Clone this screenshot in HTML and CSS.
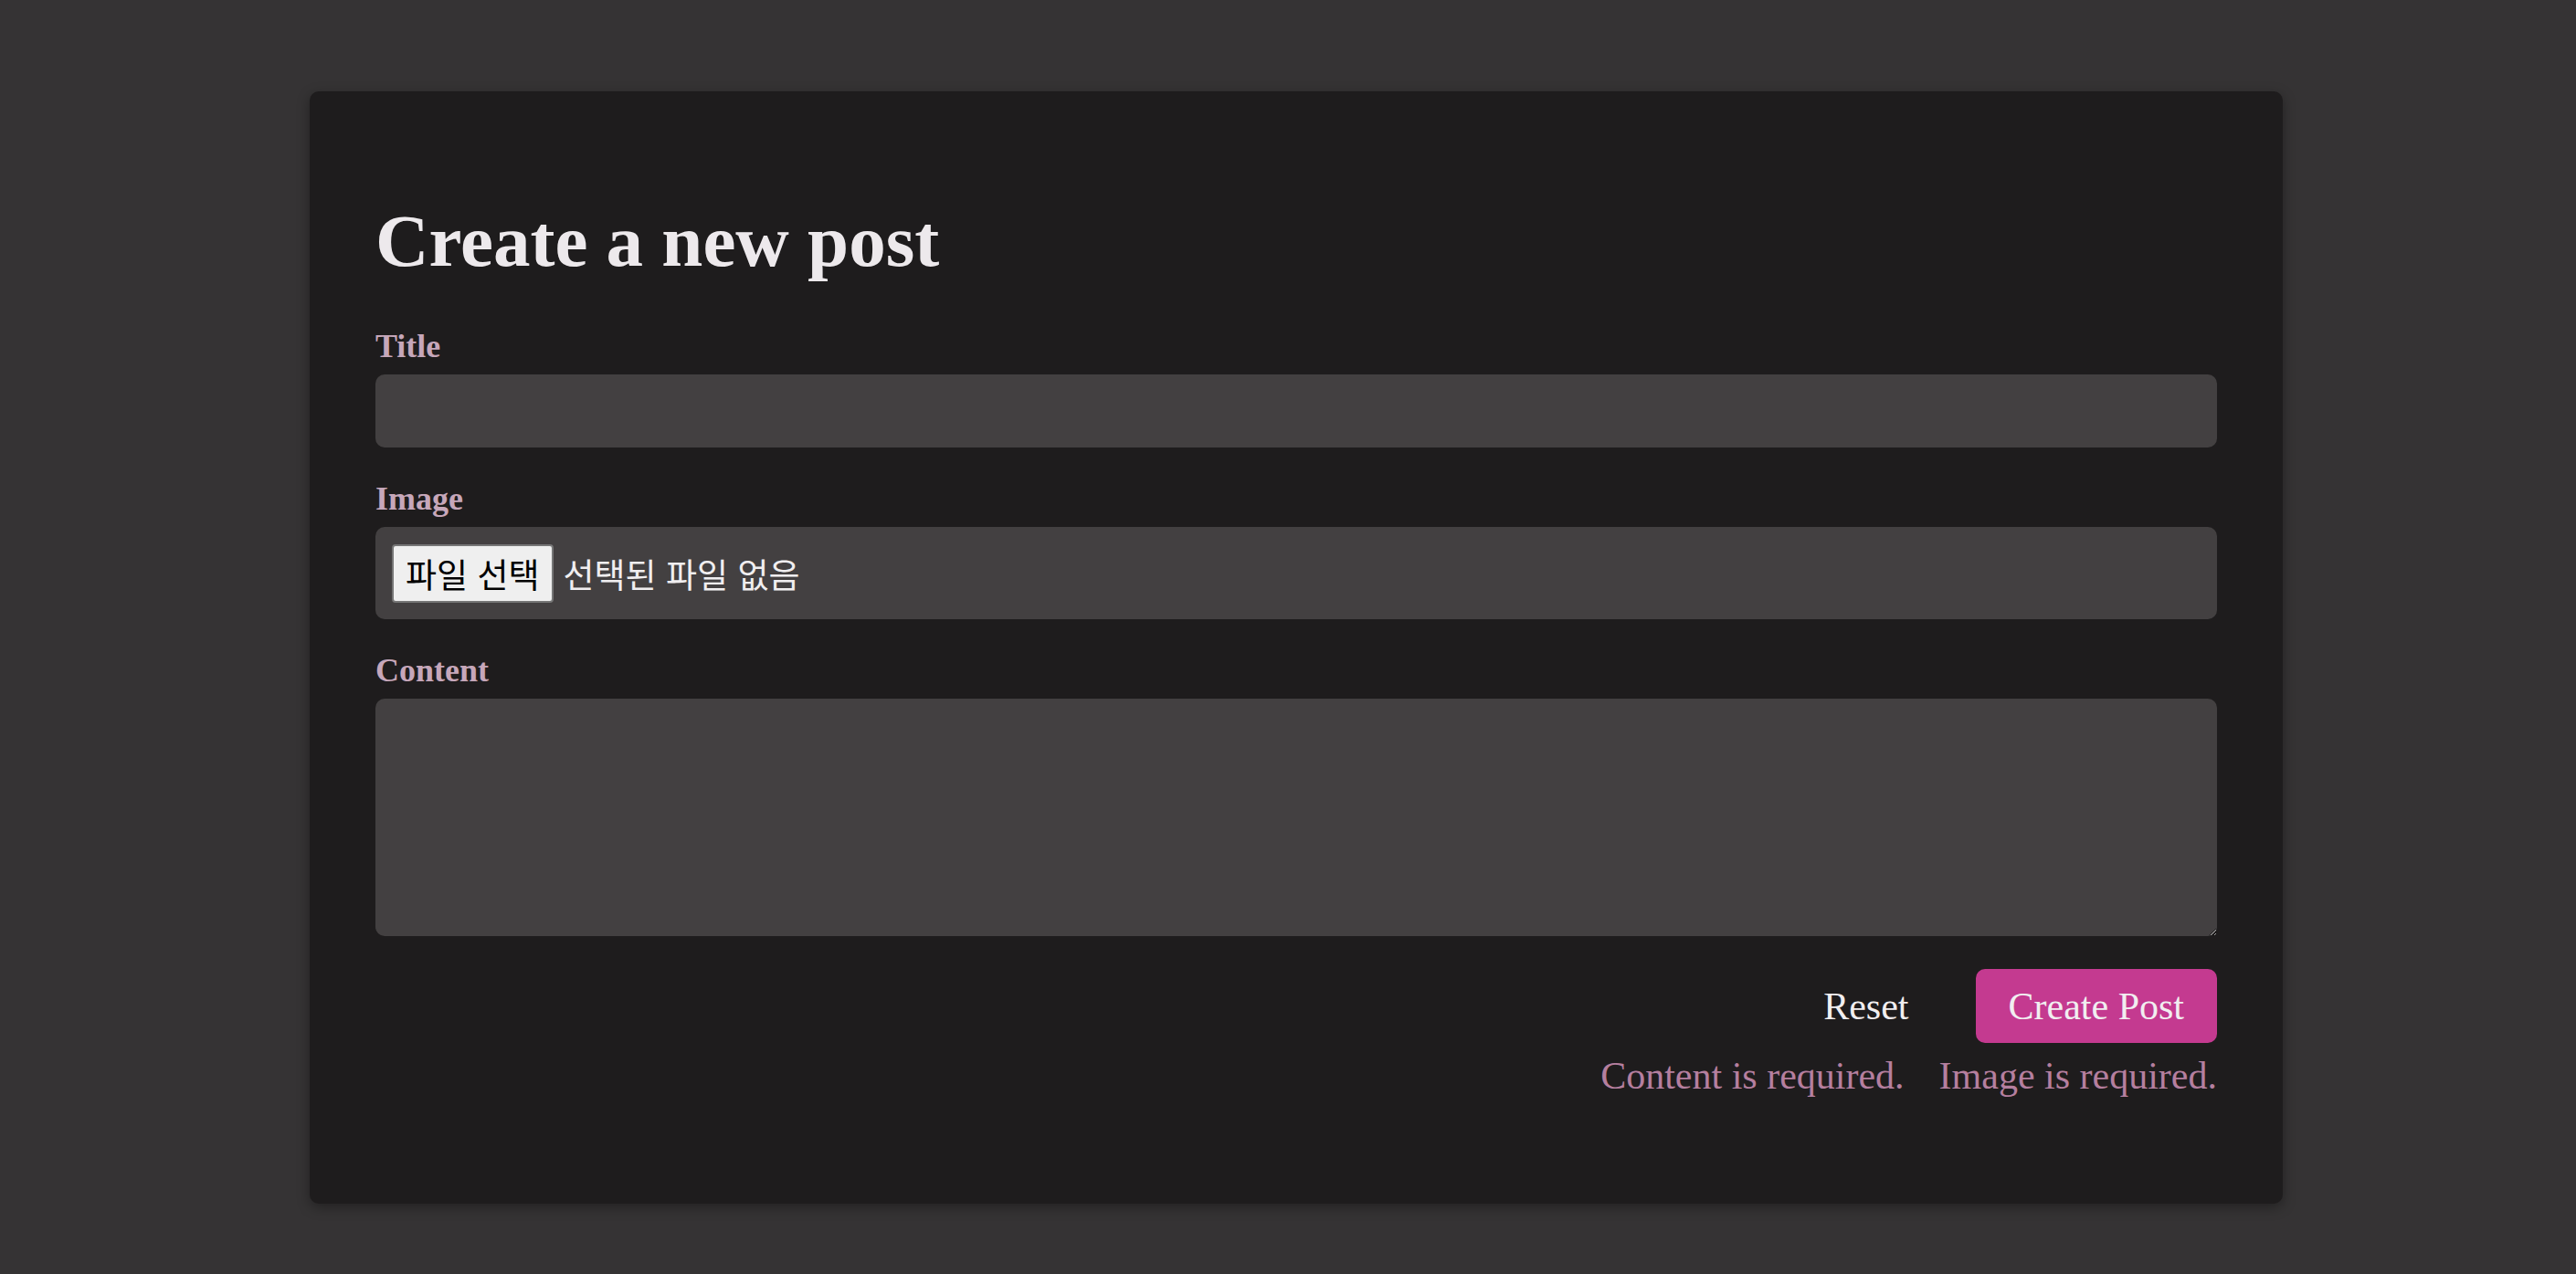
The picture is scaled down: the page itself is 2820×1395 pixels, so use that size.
FILE: index.html
```html
<!DOCTYPE html>
<html lang="ko">
<head>
<meta charset="utf-8">
<title>Create a new post</title>
<link rel="stylesheet" href="styles.css">
</head>
<body>
<main class="page">
  <form class="card">
    <h1 class="heading">Create a new post</h1>
    <div class="field">
      <label class="label" for="title">Title</label>
      <input class="input" id="title" type="text">
    </div>
    <div class="field">
      <label class="label" for="image">Image</label>
      <label class="file" for="image">
        <span class="file-btn">파일 선택</span>
        <span class="file-name">선택된 파일 없음</span>
      </label>
      <input class="file-native" id="image" type="file">
    </div>
    <div class="field">
      <label class="label" for="content">Content</label>
      <textarea class="textarea" id="content"></textarea>
    </div>
    <div class="actions">
      <button class="btn btn-reset" type="button">Reset</button>
      <button class="btn btn-primary" type="button">Create Post</button>
    </div>
    <div class="errors">
      <span class="error">Content is required.</span>
      <span class="error">Image is required.</span>
    </div>
  </form>
</main>
</body>
</html>
```
FILE: styles.css
```css
html, body {
  margin: 0;
  padding: 0;
}
body {
  background: #353334;
  font-family: "Liberation Serif", "Noto Sans CJK KR", serif;
  color: #ede9ec;
  min-height: 1395px;
}
.page {
  display: flex;
  justify-content: center;
  padding: 100px 0 0 18px;
}
.card {
  box-sizing: border-box;
  width: 2160px;
  height: 1218px;
  background: #1e1c1d;
  border-radius: 10px;
  box-shadow: 0 4px 14px rgba(0, 0, 0, 0.35);
  padding: 116px 72px 0 72px;
  display: flex;
  flex-direction: column;
}
.heading {
  margin: 0 0 43px 0;
  font-size: 81px;
  line-height: 97px;
  font-weight: 700;
  color: #ede9ec;
}
.field {
  display: flex;
  flex-direction: column;
  margin-bottom: 33px;
}
.label {
  font-size: 36px;
  line-height: 47px;
  font-weight: 700;
  color: #c6a7ba;
  margin-bottom: 7px;
}
.input, .textarea, .file {
  box-sizing: border-box;
  width: 100%;
  border: none;
  border-radius: 10px;
  background: #434041;
  color: #ede9ec;
  outline: none;
  margin: 0;
}
.input {
  height: 80px;
  padding: 0 20px;
  font-family: "Liberation Serif", serif;
  font-size: 36px;
}
.file {
  display: flex;
  align-items: center;
  height: 101px;
  padding: 0 18px;
  font-family: "Noto Sans CJK KR", sans-serif;
  font-size: 37px;
  color: #f0eef0;
  cursor: pointer;
}
.file-native {
  display: none;
}
.file-btn {
  box-sizing: border-box;
  display: flex;
  align-items: center;
  height: 64px;
  padding: 0 13px;
  margin-right: 11px;
  color: #000;
  background: #efefef;
  border: 2px solid #767676;
  border-radius: 4px;
}
.file-name {
  color: #f0eef0;
}
.textarea {
  height: 260px;
  padding: 16px 20px;
  font-family: "Liberation Serif", serif;
  font-size: 36px;
  resize: vertical;
  color-scheme: dark;
}
.actions {
  display: flex;
  justify-content: flex-end;
  gap: 37px;
  margin-top: 3px;
}
.btn {
  height: 81px;
  padding: 0 36px;
  border: none;
  border-radius: 10px;
  font-family: "Liberation Serif", serif;
  font-size: 42px;
  color: #f1eef0;
  cursor: pointer;
}
.btn-reset {
  background: transparent;
}
.btn-primary {
  background: #c43a90;
}
.errors {
  display: flex;
  justify-content: flex-end;
  gap: 38px;
  margin-top: 11px;
}
.error {
  font-size: 42px;
  line-height: 50px;
  color: #b57f9f;
}
```
